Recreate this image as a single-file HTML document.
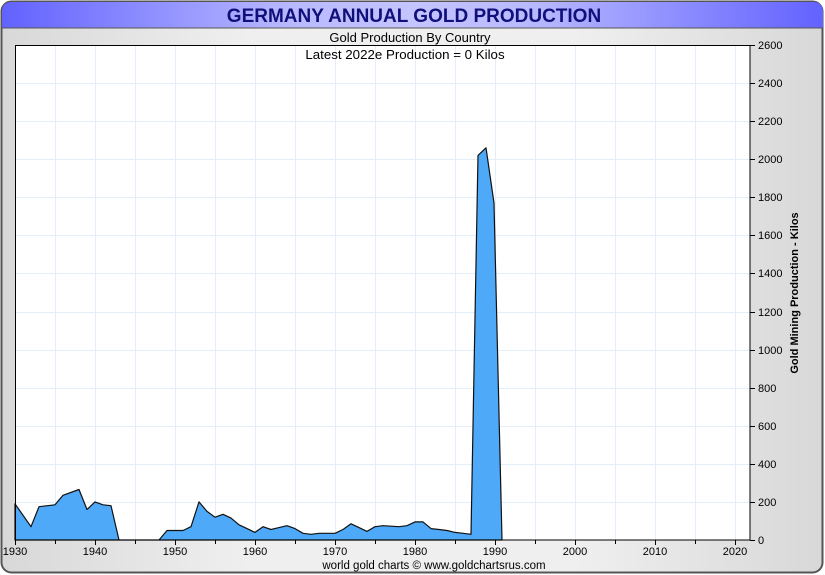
<!DOCTYPE html>
<html><head><meta charset="utf-8"><style>
html,body{margin:0;padding:0;width:825px;height:575px;overflow:hidden;background:#fff}
</style></head><body>
<svg width="825" height="575" xmlns="http://www.w3.org/2000/svg" font-family="Liberation Sans, sans-serif">
<defs>
<linearGradient id="tb" x1="0" x2="1" y1="0" y2="0">
<stop offset="0" stop-color="#6262ff"/><stop offset="0.35" stop-color="#b8b8ff"/><stop offset="0.5" stop-color="#c4c4ff"/><stop offset="0.65" stop-color="#b8b8ff"/><stop offset="1" stop-color="#6262ff"/>
</linearGradient>
<linearGradient id="bg" x1="0" x2="1" y1="0" y2="0">
<stop offset="0" stop-color="#d8d8d8"/><stop offset="0.3" stop-color="#efefef"/><stop offset="0.7" stop-color="#efefef"/><stop offset="1" stop-color="#d8d8d8"/>
</linearGradient>
</defs>
<rect x="0" y="0" width="825" height="575" fill="#fff"/>
<rect x="1.5" y="1.5" width="821" height="571" rx="10" fill="url(#bg)" stroke="#555" stroke-width="2"/>
<path d="M2,28 V12 Q2,2 12,2 H813 Q823,2 823,12 V28 Z" fill="url(#tb)"/>
<line x1="2" y1="28" x2="823" y2="28" stroke="#555" stroke-width="1"/>
<text x="414" y="22" text-anchor="middle" font-size="19" font-weight="bold" fill="#10107a">GERMANY ANNUAL GOLD PRODUCTION</text>
<text x="410" y="42" text-anchor="middle" font-size="13">Gold Production By Country</text>
<rect x="15" y="45" width="735" height="495" fill="#fff"/>
<g stroke="#e2eef8" stroke-width="1">
<path d="M55.5,45V540M95.5,45V540M135.5,45V540M175.5,45V540M215.5,45V540M255.5,45V540M295.5,45V540M335.5,45V540M375.5,45V540M415.5,45V540M455.5,45V540M495.5,45V540M535.5,45V540M575.5,45V540M615.5,45V540M655.5,45V540M695.5,45V540M735.5,45V540"/>
<path d="M15,83.5H750M15,121.5H750M15,159.5H750M15,197.5H750M15,235.5H750M15,273.5H750M15,312.5H750M15,350.5H750M15,388.5H750M15,426.5H750M15,464.5H750M15,502.5H750"/>
</g>
<text x="405" y="59" text-anchor="middle" font-size="13.3">Latest 2022e Production = 0 Kilos</text>
<path d="M15,540 L15,503.8 31,526.7 39,506.7 55,504.8 63,495.3 79,489.5 87,509.5 95,501.9 103,504.8 111,505.7 119,540 159,540 167,530.5 183,530.5 191,526.7 199,501.9 207,511.4 215,517.2 223,514.3 231,518.1 239,524.8 247,528.6 255,532.4 263,526.7 271,529.5 279,527.6 287,525.7 295,528.6 303,533.3 311,534.3 319,533.3 335,533.3 343,529.5 351,523.8 359,527.6 367,531.4 375,526.7 383,525.7 399,526.7 407,525.7 415,521.9 423,521.9 431,528.6 439,529.5 447,530.5 455,532.4 463,533.3 471,534.3 478,155.4 486,147.8 494,203 502,540 Z" fill="#4eaaf8" stroke="#111" stroke-width="1.2" stroke-linejoin="round"/>
<rect x="15.5" y="45.5" width="734.5" height="494.5" fill="none" stroke="#000" stroke-width="1"/>
<g stroke="#000" stroke-width="1">
<path d="M15.5,540V545M55.5,540V544M95.5,540V545M135.5,540V544M175.5,540V545M215.5,540V544M255.5,540V545M295.5,540V544M335.5,540V545M375.5,540V544M415.5,540V545M455.5,540V544M495.5,540V545M535.5,540V544M575.5,540V545M615.5,540V544M655.5,540V545M695.5,540V544M735.5,540V545"/>
<path d="M750,45.5h5M750,83.5h5M750,121.5h5M750,159.5h5M750,197.5h5M750,235.5h5M750,273.5h5M750,312.5h5M750,350.5h5M750,388.5h5M750,426.5h5M750,464.5h5M750,502.5h5M750,540.5h5"/>
</g>
<g font-size="11" fill="#000">
<text x="15" y="555" text-anchor="middle">1930</text><text x="95" y="555" text-anchor="middle">1940</text><text x="175" y="555" text-anchor="middle">1950</text><text x="255" y="555" text-anchor="middle">1960</text><text x="335" y="555" text-anchor="middle">1970</text><text x="415" y="555" text-anchor="middle">1980</text><text x="495" y="555" text-anchor="middle">1990</text><text x="575" y="555" text-anchor="middle">2000</text><text x="655" y="555" text-anchor="middle">2010</text><text x="735" y="555" text-anchor="middle">2020</text>
<text x="758" y="49">2600</text><text x="758" y="87">2400</text><text x="758" y="125">2200</text><text x="758" y="163">2000</text><text x="758" y="201">1800</text><text x="758" y="239">1600</text><text x="758" y="277">1400</text><text x="758" y="316">1200</text><text x="758" y="354">1000</text><text x="758" y="392">800</text><text x="758" y="430">600</text><text x="758" y="468">400</text><text x="758" y="506">200</text><text x="758" y="544">0</text>
</g>
<text transform="translate(798,293) rotate(-90)" text-anchor="middle" font-size="11" font-weight="bold">Gold Mining Production - Kilos</text>
<text x="434" y="569" text-anchor="middle" font-size="11.5">world gold charts © www.goldchartsrus.com</text>
</svg>
</body></html>
